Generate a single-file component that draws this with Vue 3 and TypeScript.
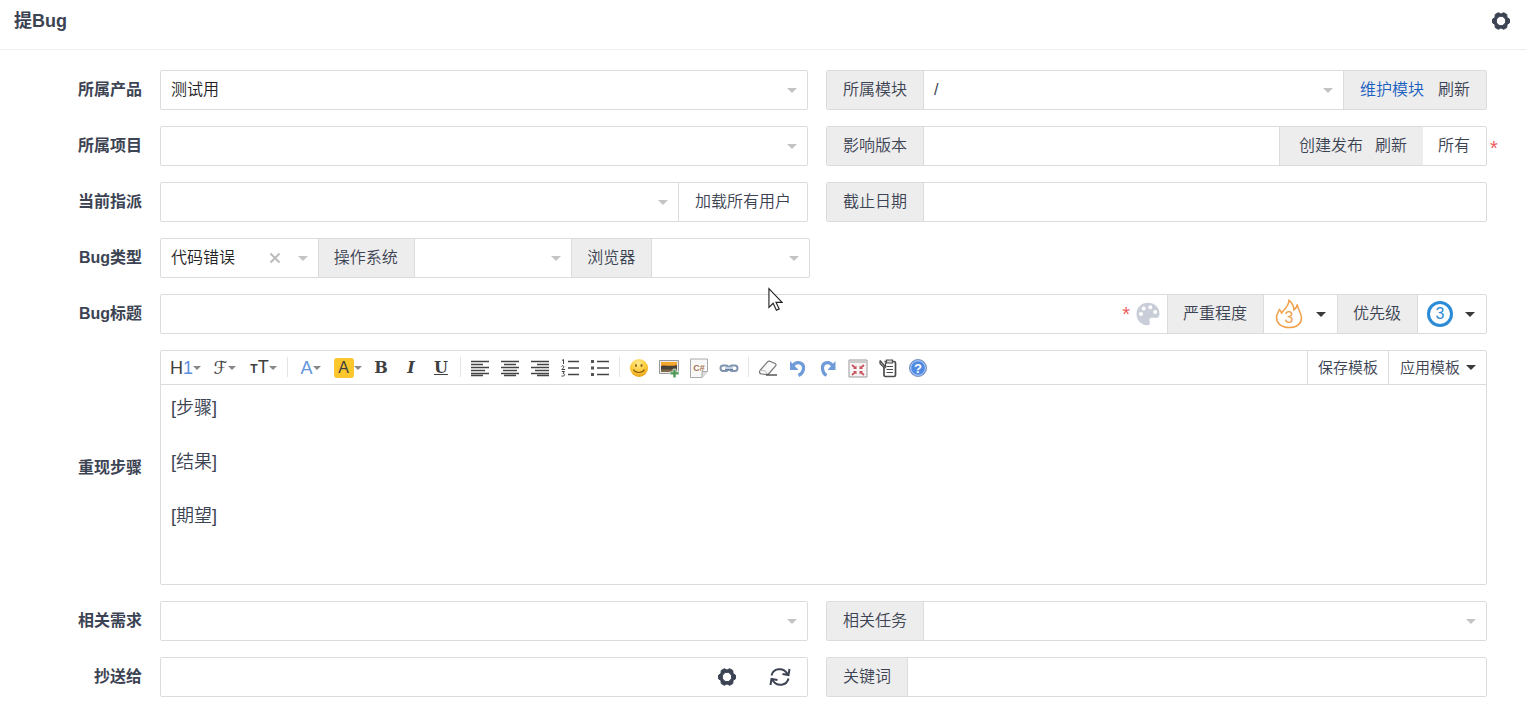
<script setup lang="ts">
import { reactive } from 'vue'

const form = reactive({
  product: '测试用',
  module: '/',
  project: '',
  build: '',
  assignedTo: '',
  deadline: '',
  type: '代码错误',
  os: '',
  browser: '',
  title: '',
  steps: '[步骤]\n\n[结果]\n\n[期望]',
  story: '',
  task: '',
  mailto: '',
  keywords: '',
})

const gearShape =
  'M18.5 8.2V11.8L16 13.5 15.8 16.5 12.7 18.3 10 16.9 7.3 18.3 4.2 16.5 4 13.5 1.5 11.8V8.2L4 6.5 4.2 3.5 7.3 1.7 10 3.1 12.7 1.7 15.8 3.5 16 6.5ZM10 5.3a4.7 4.7 0 1 0 0 9.4 4.7 4.7 0 0 0 0-9.4Z'
</script>

<template>
  <main class="page">
    <header class="header">
      <h1>提Bug</h1>
      <button class="icon-button" type="button" aria-label="设置">
        <svg class="gear" viewBox="0 0 20 20"><path :d="gearShape" /></svg>
      </button>
    </header>

    <form class="form" @submit.prevent>
      <div class="row">
        <label class="name" for="product">所属产品</label>
        <div class="pair">
          <div class="group">
            <div class="pick grow">
              <select id="product" v-model="form.product"><option>测试用</option></select>
              <i class="caret"></i>
            </div>
          </div>
          <div class="group">
            <label class="addon" for="module">所属模块</label>
            <div class="pick grow">
              <select id="module" v-model="form.module" class="plain"><option>/</option></select>
              <i class="caret"></i>
            </div>
            <div class="addon links">
              <a class="primary" href="#">维护模块</a>
              <a href="#">刷新</a>
            </div>
          </div>
        </div>
      </div>

      <div class="row">
        <label class="name" for="project">所属项目</label>
        <div class="pair">
          <div class="group">
            <div class="pick grow">
              <select id="project" v-model="form.project"><option value=""></option></select>
              <i class="caret"></i>
            </div>
          </div>
          <div class="group">
            <label class="addon" for="build">影响版本</label>
            <input id="build" v-model="form.build" class="grow" type="text" />
            <div class="addon links release">
              <a href="#">创建发布</a>
              <a href="#">刷新</a>
            </div>
            <button class="cell all" type="button">所有</button>
            <span class="required outside">*</span>
          </div>
        </div>
      </div>

      <div class="row">
        <label class="name" for="assigned">当前指派</label>
        <div class="pair">
          <div class="group">
            <div class="pick grow">
              <select id="assigned" v-model="form.assignedTo"><option value=""></option></select>
              <i class="caret"></i>
            </div>
            <button class="cell" type="button">加载所有用户</button>
          </div>
          <div class="group">
            <label class="addon" for="deadline">截止日期</label>
            <input id="deadline" v-model="form.deadline" class="grow" type="text" />
          </div>
        </div>
      </div>

      <div class="row">
        <label class="name" for="type">Bug类型</label>
        <div class="pair">
          <div class="group kinds">
            <div class="pick grow">
              <select id="type" v-model="form.type"><option>代码错误</option><option value=""></option></select>
              <button class="clear" type="button" aria-label="清除" @click="form.type = ''">
                <svg viewBox="0 0 12 12"><path d="M1.5 1.5 10.5 10.5M10.5 1.5 1.5 10.5" /></svg>
              </button>
              <i class="caret"></i>
            </div>
            <label class="addon narrow" for="os">操作系统</label>
            <div class="pick grow">
              <select id="os" v-model="form.os"><option value=""></option></select>
              <i class="caret"></i>
            </div>
            <label class="addon narrow" for="browser">浏览器</label>
            <div class="pick grow">
              <select id="browser" v-model="form.browser"><option value=""></option></select>
              <i class="caret"></i>
            </div>
          </div>
        </div>
      </div>

      <div class="row">
        <label class="name" for="title">Bug标题</label>
        <div class="group">
          <div class="title-field grow">
            <input id="title" v-model="form.title" type="text" />
            <span class="title-tools">
              <span class="required">*</span>
              <button class="icon-button" type="button" aria-label="标题颜色">
                <svg class="palette" viewBox="0 0 24 24"><path fill-rule="evenodd" d="M12 .8C5.6.8.5 5.5.5 11.7.5 18 5.300 23.300 11.300 23.300c2.300 0 3-1.600 2.400-3.300-.8-2.200-.4-4.200 2.100-4.300 2.600 0 4.500.6 6-.1 1.200-.6 1.700-2 1.700-4C23.500 5.500 18.300.8 12 .8ZM5 9.900a2 2 0 1 1 0 4 2 2 0 0 1 0-4ZM7.700 4.500a2 2 0 1 1 0 4 2 2 0 0 1 0-4ZM14.300 3.300a2 2 0 1 1 0 4 2 2 0 0 1 0-4ZM19.200 8a2 2 0 1 1 0 4 2 2 0 0 1 0-4Z" /></svg>
              </button>
            </span>
          </div>
          <span class="addon narrow">严重程度</span>
          <button class="cell level" type="button" aria-label="严重程度">
            <svg class="flame" viewBox="0 0 28 30"><path d="M14 28.5C6 28.5 1.5 24 1.5 18.5 1.5 15 3.300 13 4.500 10.500c1 1 1.500 2 2 3.500C9.500 10 14 7 14 1.300c3 2.500 5 6 5 9.500 1.500-1 3-3 3.200-5.500C22.500 10 26.500 13.500 26.500 19c0 5.500-4.500 9.500-12.500 9.500Z" /><text x="14" y="24">3</text></svg>
            <i class="caret dark"></i>
          </button>
          <span class="addon narrow">优先级</span>
          <button class="cell level tight" type="button" aria-label="优先级">
            <span class="priority">3</span>
            <i class="caret dark"></i>
          </button>
        </div>
      </div>

      <div class="row">
        <label class="name" for="steps">重现步骤</label>
        <div class="editor">
          <div class="toolbar">
            <button class="tool wide" type="button" aria-label="标题"><span class="t-head">H<b>1</b></span><i class="caret small"></i></button>
            <button class="tool wide" type="button" aria-label="字体"><span class="t-script">ℱ</span><i class="caret small"></i></button>
            <button class="tool wide" type="button" aria-label="字号"><span class="t-size"><small>T</small>T</span><i class="caret small"></i></button>
            <i class="sep"></i>
            <button class="tool mid" type="button" aria-label="文字颜色"><span class="t-color">A</span><i class="caret small"></i></button>
            <button class="tool mid" type="button" aria-label="文字背景"><span class="t-mark">A</span><i class="caret small"></i></button>
            <button class="tool serif" type="button" aria-label="粗体">B</button>
            <button class="tool serif slant" type="button" aria-label="斜体">I</button>
            <button class="tool serif under" type="button" aria-label="下划线">U</button>
            <i class="sep"></i>
            <button class="tool" type="button" aria-label="左对齐"><svg class="lines" viewBox="0 0 20 20"><path d="M1 3.5H19M1 6.5H13M1 9.5H19M1 12.5H15M1 15.5H19M1 17.5H13" /></svg></button>
            <button class="tool" type="button" aria-label="居中"><svg class="lines" viewBox="0 0 20 20"><path d="M1 3.5H19M4 6.5H16M1 9.5H19M3 12.5H17M1 15.5H19M4 17.5H16" /></svg></button>
            <button class="tool" type="button" aria-label="右对齐"><svg class="lines" viewBox="0 0 20 20"><path d="M1 3.5H19M7 6.5H19M1 9.5H19M5 12.5H19M1 15.5H19M7 17.5H19" /></svg></button>
            <button class="tool" type="button" aria-label="编号"><svg class="lines" viewBox="0 0 20 20"><path d="M8 3.5H19M8 10H19M8 16.5H19" /><path class="fine" d="M2 2.5 3.5 1.5V6M1.5 8.5C3 6.5 5.500 8.500 1.800 11.500H5M1.800 13.500H4.500L3 15.500C5.500 15.500 5 19 1.500 18" /></svg></button>
            <button class="tool" type="button" aria-label="项目符号"><svg class="lines" viewBox="0 0 20 20"><path d="M7 3.5H19M7 10H19M7 16.5H19" /><path class="dots" d="M1 2h3v3H1ZM1 8.500h3v3H1ZM1 15h3v3H1Z" /></svg></button>
            <i class="sep"></i>
            <button class="tool" type="button" aria-label="表情">
              <svg viewBox="0 0 20 20"><defs><radialGradient id="smile" cx=".45" cy=".25" r=".8"><stop offset="0" stop-color="#ffe98a" /><stop offset=".6" stop-color="#fbc832" /><stop offset="1" stop-color="#e79a1c" /></radialGradient></defs><circle cx="10" cy="10" r="9" fill="url(#smile)" /><ellipse cx="7" cy="7.5" rx="1" ry="1.5" fill="#8f6518" /><ellipse cx="12.5" cy="7.5" rx="1" ry="1.5" fill="#8f6518" /><path d="M4.500 11.500c2 4 8.500 4 11 0" fill="none" stroke="#8a5d14" stroke-width="1.2" /></svg>
            </button>
            <button class="tool" type="button" aria-label="图片">
              <svg viewBox="0 0 20 20"><path d="M.5 2.500h19v13H.5Z" fill="#eee" stroke="#999" /><path d="M2 4h16v5H2Z" fill="#f5a62b" /><path d="M2 8c4-1.500 7 1 16-1v7H2Z" fill="#4a4238" /><path d="M2 11.500h16V14H2Z" fill="#806a4a" /><path d="M14 11h3v2.800h3v3h-3v3h-3v-3h-3v-3h3Z" fill="#4f9b57" stroke="#fff" stroke-width=".6" /></svg>
            </button>
            <button class="tool" type="button" aria-label="插入代码">
              <svg viewBox="0 0 20 20"><path d="M1.500 1h17v12.500l-5.500 6H1.500Z" fill="#f8f8f8" stroke="#aaa" /><path d="M18.500 13.500H13v6" fill="#ddd" stroke="#aaa" /><text x="10" y="13" class="code">C#</text></svg>
            </button>
            <button class="tool" type="button" aria-label="链接">
              <svg viewBox="0 0 20 20"><g fill="none" stroke="#7f93ae" stroke-width="2"><rect x="1.5" y="7.5" width="8" height="5.5" rx="2.7" /><rect x="10.5" y="7.5" width="8" height="5.5" rx="2.7" /></g><path d="M6 10.200h8" stroke="#c2d1e5" stroke-width="2.5" /><path d="M6 11.500h8" stroke="#68809f" /></svg>
            </button>
            <i class="sep"></i>
            <button class="tool" type="button" aria-label="清除格式">
              <svg viewBox="0 0 20 20"><path d="M2 12.500 9.500 3.800c.8-.8 1.500-1 2.500-.6l5 2.300c1.200.6 1.300 1.500.6 2.400l-6.600 7.600c-.7.8-1.500 1.100-2.500 1L3.500 16C1.500 15.800 1 14 2 12.500Z" fill="#fafafa" stroke="#777" stroke-width="1.2" /><path d="M2.300 12.200l4.700.8c1.200.3 1.700 1.500 1.300 3.200" fill="none" stroke="#bbb" /><path d="M8 17h11" stroke="#555" stroke-width="1.5" /></svg>
            </button>
            <button class="tool" type="button" aria-label="撤销">
              <svg viewBox="0 0 20 20"><path d="M5 7.500C8.500 2.500 16 4.500 15.500 10.500c-.2 3-2 5.500-5 7" fill="none" stroke="#6f9bd8" stroke-width="3.2" /><path d="M2 3v9h8.500Z" fill="#6f9bd8" /></svg>
            </button>
            <button class="tool" type="button" aria-label="重做">
              <svg viewBox="0 0 20 20"><path d="M14.500 7.500C11 2.500 4 4.500 4.500 10.500c.2 3 1.500 5.500 4 7" fill="none" stroke="#6f9bd8" stroke-width="3.2" /><path d="M17.500 3v9H9.500Z" fill="#6f9bd8" /></svg>
            </button>
            <button class="tool" type="button" aria-label="全屏">
              <svg viewBox="0 0 20 20"><path d="M1 2h18v17H1Z" fill="#f9f4f4" stroke="#999" /><path d="M1.500 2.500h17v2.500h-17Z" fill="#ccc" /><path d="M4 7l3.500 3M16 7l-3.500 3M4 17l3.500-3M16 17l-3.500-3" stroke="#c85360" stroke-width="1.7" /><path d="M8.500 7.500v3.500H5ZM11.500 7.500v3.500H15ZM8.500 16.500V13H5ZM11.500 16.500V13H15Z" fill="#c85360" /></svg>
            </button>
            <button class="tool" type="button" aria-label="粘贴">
              <svg viewBox="0 0 20 20" fill="none" stroke="#4b4b4b"><path d="M6.500 3.500h9.500c1 0 1.500.5 1.500 1.500v12c0 1-.5 1.500-1.500 1.500H7.500c-1 0-1.500-.5-1.500-1.500V9" stroke-width="1.7" fill="#fff" /><path d="M8.500 2h6v3h-6Z" fill="#ddd" stroke-width="1.2" /><path d="M8.500 8.500h6.500M8.500 11.500h6.500M8.500 14.500h6.500" /><path d="M2 2.500l5.500 6.500V4.500M2 2.500v3l4 4" stroke-width="1.3" /></svg>
            </button>
            <button class="tool" type="button" aria-label="帮助">
              <svg viewBox="0 0 20 20"><circle cx="10" cy="10" r="8.5" fill="#4f89e2" stroke="#7f95bd" /><circle cx="10" cy="10" r="7.3" fill="none" stroke="#b9d3fa" /><text x="10" y="14.5" class="help">?</text></svg>
            </button>
            <div class="templates">
              <button type="button">保存模板</button>
              <button type="button">应用模板<i class="caret dark"></i></button>
            </div>
          </div>
          <textarea id="steps" v-model="form.steps"></textarea>
        </div>
      </div>

      <div class="row">
        <label class="name" for="story">相关需求</label>
        <div class="pair">
          <div class="group">
            <div class="pick grow">
              <select id="story" v-model="form.story"><option value=""></option></select>
              <i class="caret"></i>
            </div>
          </div>
          <div class="group">
            <label class="addon" for="task">相关任务</label>
            <div class="pick grow">
              <select id="task" v-model="form.task"><option value=""></option></select>
              <i class="caret"></i>
            </div>
          </div>
        </div>
      </div>

      <div class="row">
        <label class="name" for="mailto">抄送给</label>
        <div class="pair">
          <div class="group mail">
            <input id="mailto" v-model="form.mailto" class="grow" type="text" />
            <button class="icon-button" type="button" aria-label="管理联系人">
              <svg class="gear" viewBox="0 0 20 20"><path :d="gearShape" /></svg>
            </button>
            <button class="icon-button" type="button" aria-label="刷新">
              <svg class="sync" viewBox="0 0 22 20"><path d="M2.500 8.500C4 1.500 14-.5 18.500 7M20.500 2l-1 6-6-1M19.500 11.500C18 18.500 8 20.500 3.500 13M1.500 18l1-6 6 1" /></svg>
            </button>
          </div>
          <div class="group">
            <label class="addon" for="keywords">关键词</label>
            <input id="keywords" v-model="form.keywords" class="grow" type="text" />
          </div>
        </div>
      </div>
    </form>

    <svg class="pointer" viewBox="0 0 16 25"><path d="M1 1v20l4.500-4.500 3.500 7.500 3-1.500-3.500-7H15Z" /></svg>
  </main>
</template>

<style>
body {
  margin: 0;
  background: #fff;
}
</style>

<style scoped>
.page {
  position: relative;
  color: #3c4353;
  font: 350 16px/20px "Liberation Sans", "Noto Sans CJK SC", sans-serif;
}

.page * {
  box-sizing: border-box;
}

button,
input,
select,
textarea {
  margin: 0;
  padding: 0;
  border: 0;
  border-radius: 0;
  outline: 0;
  background: none;
  color: inherit;
  font: inherit;
}

button,
select {
  cursor: pointer;
}

a {
  color: inherit;
  text-decoration: none;
}

svg {
  display: block;
}

.header {
  display: flex;
  align-items: center;
  justify-content: space-between;
  height: 50px;
  padding: 0 15px 8px 14px;
  border-bottom: 1px solid #eee;
}

h1 {
  margin: 0;
  font-size: 18px;
  line-height: 24px;
  font-weight: 700;
}

.icon-button {
  display: grid;
  place-items: center;
}

.gear {
  width: 20px;
  height: 20px;
  fill: #3c4353;
  fill-rule: evenodd;
  stroke: #3c4353;
  stroke-linejoin: round;
}

.form {
  display: grid;
  gap: 16px;
  padding: 20px 39px 8px 0;
}

.row {
  display: grid;
  grid-template-columns: 142px minmax(0, 1fr);
  column-gap: 18px;
  align-items: center;
}

.name {
  text-align: right;
  font-weight: 700;
}

.pair {
  display: grid;
  grid-template-columns: minmax(0, 648fr) minmax(0, 661fr);
  column-gap: 18px;
}

.group {
  position: relative;
  display: flex;
  height: 40px;
  border: 1px solid #dcdcdc;
  border-radius: 2px;
}

.kinds {
  margin-right: -2px;
}

.grow {
  flex: 1 1 0;
  min-width: 0;
}

.group > * + * {
  border-left: 1px solid #dcdcdc;
}

input,
select {
  width: 100%;
  height: 38px;
  padding: 0 10px;
}

.addon {
  display: flex;
  align-items: center;
  padding: 0 16px;
  background: #ededed;
  white-space: nowrap;
}

.addon.narrow {
  padding: 0 16px 0 15px;
}

.addon.links {
  gap: 14px;
  padding: 0 16px;
}

.addon.release {
  gap: 12px;
  padding: 0 16px 0 19px;
}

.primary {
  color: #1a5fc0;
}

.cell {
  padding: 0 16px;
  white-space: nowrap;
}

.group > .cell.all {
  padding: 0 16px 0 15px;
  border-left: 0;
}

.required {
  color: #ea5b5b;
  font-size: 20px;
  line-height: 20px;
}

.group > .outside {
  position: absolute;
  left: 100%;
  top: 11px;
  padding-left: 4px;
  border: 0;
}

.pick {
  display: grid;
  grid-template-columns: minmax(0, 1fr) auto auto;
  align-items: center;
}

.pick select {
  grid-area: 1 / 1 / 2 / 4;
  appearance: none;
  color: #222;
}

.pick .plain {
  color: #3c4353;
}

.pick .caret {
  grid-area: 1 / 3;
  margin-right: 10px;
  pointer-events: none;
}

.clear {
  grid-area: 1 / 2;
  margin-right: 17px;
  z-index: 1;
}

.clear svg {
  width: 12px;
  height: 12px;
  fill: none;
  stroke: #bbb;
  stroke-width: 2;
}

.caret {
  flex: none;
  width: 0;
  height: 0;
  border: 5px solid transparent;
  border-top-color: #c4c4c4;
  border-bottom: 0;
}

.caret.dark {
  border-top-color: #3a3a3a;
}

.caret.small {
  border-width: 4px 4px 0;
  border-top-color: #888;
}

.title-field {
  display: grid;
  align-items: center;
}

.title-field > * {
  grid-area: 1 / 1;
}

.title-tools {
  display: flex;
  align-items: center;
  gap: 6px;
  justify-self: end;
  margin-right: 7px;
}

.palette {
  width: 24px;
  height: 24px;
  fill: #c9cdd8;
}

.level {
  display: flex;
  align-items: center;
  gap: 13px;
  padding: 0 11px;
}

.level.tight {
  gap: 12px;
  padding: 0 11px 0 9px;
}

.flame {
  width: 28px;
  height: 30px;
  fill: none;
  stroke: #f0a04b;
  stroke-width: 1.5;
}

.flame text {
  fill: #f0a04b;
  stroke: none;
  font-size: 16px;
  text-anchor: middle;
}

.priority {
  width: 26px;
  height: 26px;
  border: 3px solid #2b8bd6;
  border-radius: 50%;
  color: #2b8bd6;
  text-align: center;
}

.editor {
  border: 1px solid #dcdcdc;
  border-radius: 2px;
}

.toolbar {
  display: flex;
  align-items: stretch;
  height: 34px;
  padding-left: 5px;
  border-bottom: 1px solid #dcdcdc;
}

.tool {
  display: flex;
  flex: none;
  align-items: center;
  justify-content: center;
  width: 30px;
  color: #404040;
}

.tool svg {
  width: 20px;
  height: 20px;
}

.tool.wide {
  width: 39px;
}

.tool.mid {
  width: 37px;
}

.tool .lines {
  fill: none;
  stroke: #444;
  stroke-width: 1.4;
}

.lines .fine {
  stroke-width: 1;
}

.lines .dots {
  fill: #555;
  stroke: none;
}

.t-head,
.t-size {
  font-size: 18px;
}

.t-head b {
  color: #5b8fe0;
  font-weight: 400;
}

.t-size small {
  font-size: 12px;
  font-weight: 700;
}

.t-script {
  font: 18px/20px "DejaVu Serif", "DejaVu Sans", serif;
}

.t-color {
  color: #6495dc;
  font-size: 18px;
}

.t-mark {
  width: 20px;
  border-radius: 3px;
  background: #fcc62d;
  font-size: 16px;
  line-height: 20px;
}

.serif {
  font: 700 16px/20px "DejaVu Serif", serif;
}

.slant {
  font-style: italic;
}

.under {
  text-decoration: underline;
}

.sep {
  flex: none;
  width: 9px;
  height: 20px;
  margin: 6px 0;
  background: linear-gradient(#e4e4e4, #e4e4e4) center / 1px 100% no-repeat;
}

.code {
  fill: #a4734f;
  font-size: 9px;
  font-weight: 700;
  text-anchor: middle;
}

.help {
  fill: #fff;
  font-size: 13px;
  font-weight: 700;
  text-anchor: middle;
}

.templates {
  display: flex;
  margin-left: auto;
  font-size: 15px;
}

.templates button {
  display: flex;
  align-items: center;
  gap: 6px;
  padding: 0 10px;
  border-left: 1px solid #dcdcdc;
  white-space: nowrap;
}

.templates button:last-child {
  padding-left: 11px;
}

textarea {
  display: block;
  width: 100%;
  height: 199px;
  padding: 10px;
  resize: none;
  font-size: 18px;
  line-height: 27px;
}

.group.mail > * {
  border-left: 0;
}

.mail {
  gap: 32px;
  padding-right: 16px;
}

.sync {
  width: 22px;
  height: 20px;
  fill: none;
  stroke: #3c4353;
  stroke-width: 2;
}

.pointer {
  position: absolute;
  left: 768px;
  top: 287px;
  width: 15px;
  height: 25px;
  fill: #fff;
  stroke: #222;
  stroke-width: 1.2;
  pointer-events: none;
}
</style>
